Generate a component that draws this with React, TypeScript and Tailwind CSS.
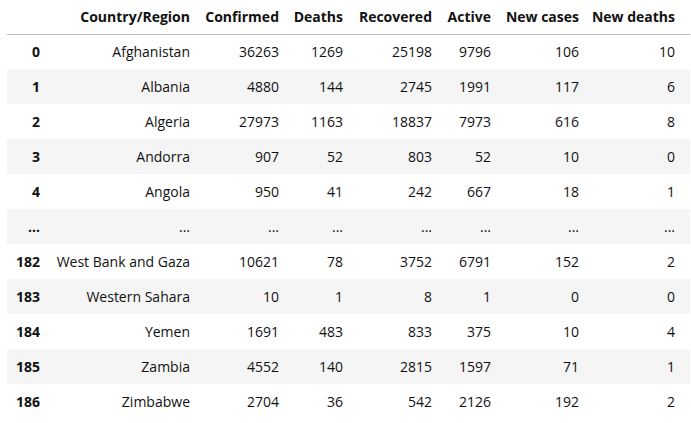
import React from "react";

const cols = ["", "Country/Region", "Confirmed", "Deaths", "Recovered", "Active", "New cases", "New deaths"];
const widths = ["w-[40px]", "w-[150px]", "w-[89px]", "w-[64px]", "w-[89px]", "w-[59px]", "w-[88px]", "w-[104px]"];

const rows: string[][] = [
  ["0", "Afghanistan", "36263", "1269", "25198", "9796", "106", "10"],
  ["1", "Albania", "4880", "144", "2745", "1991", "117", "6"],
  ["2", "Algeria", "27973", "1163", "18837", "7973", "616", "8"],
  ["3", "Andorra", "907", "52", "803", "52", "10", "0"],
  ["4", "Angola", "950", "41", "242", "667", "18", "1"],
  ["...", "...", "...", "...", "...", "...", "...", "..."],
  ["182", "West Bank and Gaza", "10621", "78", "3752", "6791", "152", "2"],
  ["183", "Western Sahara", "10", "1", "8", "1", "0", "0"],
  ["184", "Yemen", "1691", "483", "833", "375", "10", "4"],
  ["185", "Zambia", "4552", "140", "2815", "1597", "71", "1"],
  ["186", "Zimbabwe", "2704", "36", "542", "2126", "192", "2"],
];

export default function App() {
  return (
    <div className="w-[691px] h-[423px] bg-white pl-[7px] pr-[1px] text-[#111] text-[14px] font-['Open_Sans',sans-serif]">
      <table className="table-fixed border-collapse w-[683px]">
        <colgroup>
          {widths.map((w, i) => (
            <col key={i} className={w} />
          ))}
        </colgroup>
        <thead>
          <tr className="h-[34px] border-b border-[#bdbdbd]">
            {cols.map((c, i) => (
              <th
                key={i}
                className={`text-right font-bold pb-[1px] align-middle whitespace-nowrap ${i === 7 ? "pr-[15px]" : "pr-[7px]"}`}
              >
                {c}
              </th>
            ))}
          </tr>
        </thead>
        <tbody>
          {rows.map((r, ri) => (
            <tr key={ri} className={`h-[35px] ${ri % 2 === 1 ? "bg-[#f5f5f5]" : "bg-white"}`}>
              {r.map((v, ci) =>
                ci === 0 ? (
                  <th key={ci} className="text-right font-bold pr-[7px] align-middle">
                    {v}
                  </th>
                ) : (
                  <td
                    key={ci}
                    className={`text-right align-middle whitespace-nowrap ${ci === 7 ? "pr-[15px]" : "pr-[7px]"}`}
                  >
                    {v}
                  </td>
                )
              )}
            </tr>
          ))}
        </tbody>
      </table>
    </div>
  );
}
